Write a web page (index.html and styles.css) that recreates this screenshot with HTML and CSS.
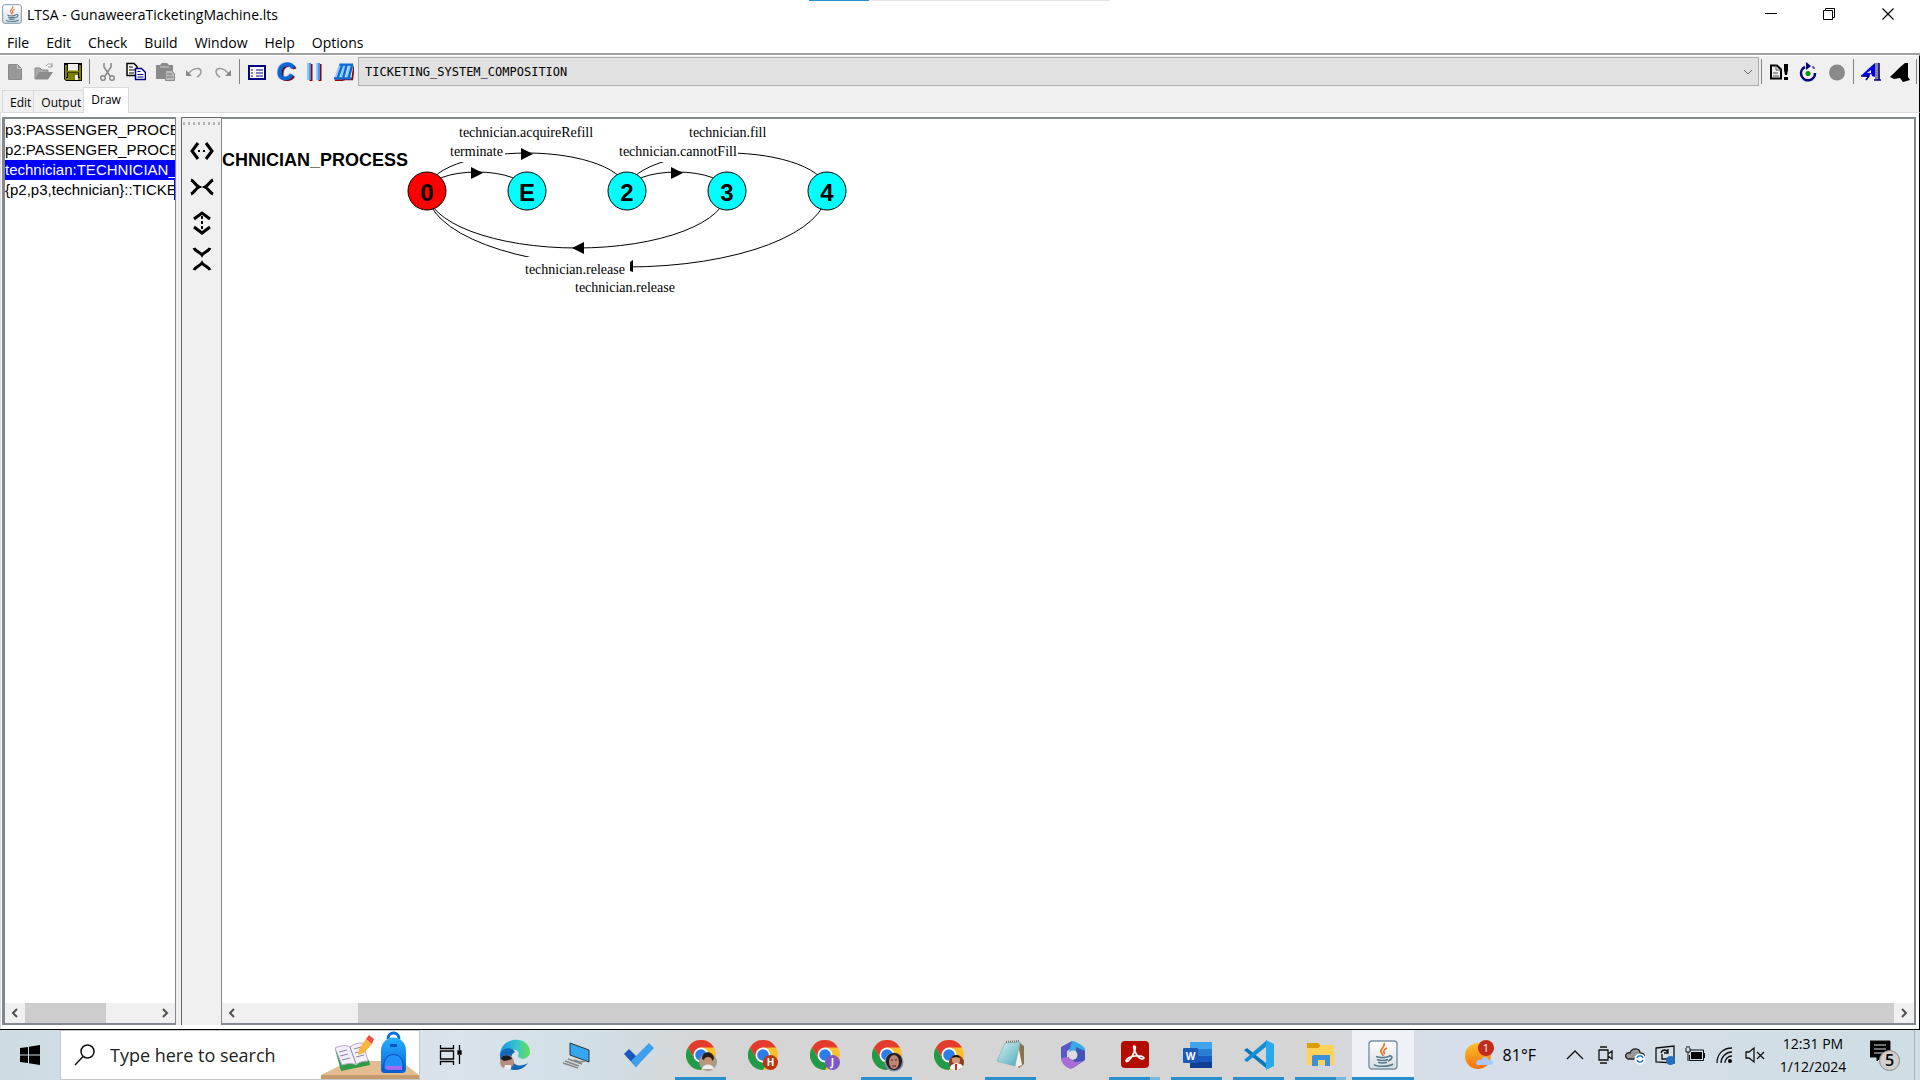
FILE: index.html
```html
<!DOCTYPE html>
<html lang="en">
<head>
<meta charset="utf-8">
<title>LTSA - GunaweeraTicketingMachine.lts</title>
<link rel="stylesheet" href="styles.css">
</head>
<body>
<svg class="defs" aria-hidden="true">
  <defs>
    <linearGradient id="paper" x1="0" y1="0" x2="0" y2="1"><stop offset="0" stop-color="#fff"/><stop offset="1" stop-color="#d5dde3"/></linearGradient>
    <linearGradient id="edgeTop" x1="0" y1="0" x2="1" y2="0"><stop offset="0" stop-color="#1795dc"/><stop offset=".55" stop-color="#35c5cf"/><stop offset="1" stop-color="#65e04c"/></linearGradient>
    <linearGradient id="note" x1="0" y1="0" x2="1" y2="1"><stop offset="0" stop-color="#d9f3f5"/><stop offset="1" stop-color="#4ba8b8"/></linearGradient>
    <linearGradient id="sun" x1="0" y1="0" x2="0" y2="1"><stop offset="0" stop-color="#f8c22c"/><stop offset="1" stop-color="#f4700e"/></linearGradient>
    <linearGradient id="bag" x1="0" y1="0" x2="0" y2="1"><stop offset="0" stop-color="#28b2ff"/><stop offset="1" stop-color="#0560d6"/></linearGradient>
    <symbol id="java" viewBox="0 0 30 30">
      <rect x="1" y="1" width="28" height="28" rx="3" fill="url(#paper)" stroke="#7890a3" stroke-width="1.4"/>
      <path d="M16 3c2 4-5 6-3 9 1 2 2 2 2 4M19 8c-4 2-4 4-2 6" fill="none" stroke="#e8762c" stroke-width="1.7"/>
      <path d="M8 16.500c4 1.500 10 1.500 13-.3M9 19.500c4 1.200 8 1.200 11 0M10 22.300c3 1 6 1 9 0M21 16c4-1 4 3-1 5M6 24.500c3 2.500 15 2.500 19-.5" fill="none" stroke="#55798f" stroke-width="1.600"/>
    </symbol>
    <symbol id="chrome" viewBox="0 0 30 30">
      <circle cx="15" cy="15" r="15" fill="#fbc02d"/>
      <path d="M2 7.500A15 15 0 0 1 28 7.500L15 7.500 8.500 19Z" fill="#e33b2e"/>
      <path d="M2 7.500A15 15 0 0 0 15 30l6.500-11.300L8.500 18.700Z" fill="#219a4a"/>
      <circle cx="15" cy="15" r="7.500" fill="#fff"/>
      <circle cx="15" cy="15" r="5.800" fill="#2b7de9"/>
    </symbol>
    <symbol id="left" viewBox="0 0 10 12"><path d="M7 2 3 6l4 4" fill="none" stroke="#505050" stroke-width="2"/></symbol>
    <symbol id="right" viewBox="0 0 10 12"><path d="M3 2l4 4-4 4" fill="none" stroke="#505050" stroke-width="2"/></symbol>
  </defs>
</svg>

<main class="window">
  <header class="titlebar">
    <svg class="app-icon" viewBox="0 0 30 30"><use href="#java"/></svg>
    <h1>LTSA - GunaweeraTicketingMachine.lts</h1>
    <div class="capture"></div>
    <div class="caption-buttons">
      <button aria-label="Minimize"><svg width="12" height="12"><path d="M0 5.500h12" stroke="#000"/></svg></button>
      <button aria-label="Restore"><svg width="12" height="12"><path d="M.5 2.500h9v9h-9zM2.500 2.500v-2h9v9h-2" fill="none" stroke="#000"/></svg></button>
      <button aria-label="Close"><svg width="12" height="12"><path d="M.5.5l11 11M11.500.5l-11 11" stroke="#000" stroke-width="1.200"/></svg></button>
    </div>
  </header>

  <nav class="menubar">
    <button>File</button><button>Edit</button><button>Check</button><button>Build</button><button>Window</button><button>Help</button><button>Options</button>
  </nav>

  <div class="toolbar">
    <button aria-label="New"><svg viewBox="0 0 20 20"><path d="M3.500 2.500h9l4 4v11h-13z" fill="#999" stroke="#8a8a8a"/><path d="M12.500 2.500v4h4" fill="none" stroke="#ccc"/></svg></button>
    <button aria-label="Open"><svg viewBox="0 0 20 20"><path d="M1 17V6h5l2 2h6v3" fill="#aaa" stroke="#8a8a8a"/><path d="M1 17.500 5 10h14l-5 7.500z" fill="#8c8c8c"/><path d="M12 4c2-3 5-3 6 0M18 1v4h-4" fill="none" stroke="#999"/></svg></button>
    <button aria-label="Save"><svg viewBox="0 0 20 20"><path d="M1 1h18v18H3l-2-2z"/><path d="M5 2h10v7H5z" fill="#efefef"/><path d="M2 3h1v13h2v-5h10v5h2V5h1v13H3l-1-1z" fill="#808000"/><path d="M3 9.500h14M3 3v12M17 3v12" stroke="#808000" stroke-width="2"/><path d="M12 13h3v5h-3z" fill="#efefef"/></svg></button>
    <span class="sep"></span>
    <button aria-label="Cut"><svg viewBox="0 0 20 20" fill="none" stroke="#888" stroke-width="1.500"><path d="M7 1v4l6 9M14 1v4l-6 9"/><circle cx="6" cy="16" r="2.300"/><circle cx="15" cy="16" r="2.300"/></svg></button>
    <button aria-label="Copy"><svg viewBox="0 0 20 20" fill="#fff"><path d="M1 1.500h7l3 3v9H1z" stroke="#000" stroke-width="1.500"/><path d="M3 5h4M3 8h6M3 11h5" stroke="#000"/><path d="M9.500 6.500h6l4 4v7h-10z" stroke="#000080" stroke-width="1.500"/><path d="M11.500 9.500h3M11.500 12.500h6M11.500 15h6" stroke="#000080"/></svg></button>
    <button aria-label="Paste"><svg viewBox="0 0 20 20"><path d="M1 3h4l2-2h5l2 2h4v14H1z" fill="#8a8a8a"/><path d="M5 5h9" stroke="#ccc"/><path d="M10.500 8.500h6l3 3v7h-9z" fill="#bbb" stroke="#888"/><path d="M12 12h5M12 15h6" stroke="#777"/></svg></button>
    <button aria-label="Undo"><svg viewBox="0 0 20 20"><path d="M5 11c4-5 11-6 12-2 0 3-2 5-4 6" fill="none" stroke="#999" stroke-width="1.500"/><path d="M2 8v6h6z" fill="#888"/></svg></button>
    <button aria-label="Redo"><svg viewBox="0 0 20 20"><path d="M15 11C11 6 4 5 3 9c0 3 2 5 4 6" fill="none" stroke="#999" stroke-width="1.500"/><path d="M18 8v6h-6z" fill="#888"/></svg></button>
    <span class="sep"></span>
    <button aria-label="Alphabet"><svg viewBox="0 0 20 20"><path d="M2 4h16v13H2z" fill="#fff" stroke="#000080" stroke-width="2"/><path d="M4 8h2M4 11h2M4 14h2M9 8h7M9 11h7M9 14h7" stroke="#000080"/></svg></button>
    <button class="compile" aria-label="Compile">C</button>
    <button aria-label="Compose"><svg viewBox="0 0 20 20"><path d="M6 2v17M15 2v17" stroke="#900" stroke-width="3"/><path d="M4 1v17M13 1v17" stroke="#8fc7ff" stroke-width="4"/><path d="M5 1v17M14 1v17" stroke="#0a62cc" stroke-width="1"/></svg></button>
    <button aria-label="Minimise"><svg viewBox="0 0 22 20" fill="none"><path d="M1 19h8l3-1h8l2-14" stroke="#900" stroke-width="2"/><path d="M3 17 8 2M9 17l4-15M15 17l4-15" stroke="#8fc7ff" stroke-width="5"/><path d="M0 17h19M4 17 9 2M10 17l4-15M16 17l4-15M6 2h15" stroke="#0a6ad6" stroke-width="2.500"/></svg></button>
    <select class="target" aria-label="Target composition"><option>TICKETING_SYSTEM_COMPOSITION</option></select>
    <span class="sep"></span>
    <button aria-label="Safety check"><svg viewBox="0 0 20 20"><path d="M2 3.500h6l4 4v9H2z" fill="#eee" stroke="#000" stroke-width="2"/><path d="M7 3v5h5M4 11h5M4 14h6" fill="none" stroke="#555"/><path d="M15 2h4v6l-1 5h-2l-1-5zM15 15h4v3h-4z"/></svg></button>
    <button aria-label="Progress check"><svg viewBox="0 0 20 20"><path d="M7 5a7 7 0 1 0 10 6" fill="none" stroke="#000080" stroke-width="2.500"/><path d="M8 0v8l5-4z" fill="#000080"/><path d="M14 5h2v2" stroke="#000080" fill="none"/><circle cx="10" cy="11.500" r="2.500" fill="#090"/></svg></button>
    <button aria-label="Stop"><svg viewBox="0 0 20 20"><circle cx="10" cy="10.500" r="8" fill="#8a8a8a"/></svg></button>
    <span class="sep"></span>
    <button aria-label="Animator"><svg viewBox="0 0 20 20"><path d="M14 1h4l1 17h-5z" fill="#888"/><path d="M0 14C4 10 9 5 14 1v14l-3-1-1-3-2 4z" fill="#00e"/><path d="M6 11l4-3v3z" fill="#f0f0f0"/><path d="M0 14h8M5 18l3-4M18 1v17M13 18h7" stroke="#000080" stroke-width="1.500"/></svg></button>
    <button aria-label="Animator trace"><svg viewBox="0 0 20 20"><path d="M0 15c5-5 9-9 15-14h3v14l2 3-7 2-3-4-6 1z"/></svg></button>
    <span class="sep last"></span>
  </div>

  <div class="tabs" role="tablist">
    <button role="tab">Edit</button><button role="tab">Output</button><button role="tab" class="active" aria-selected="true">Draw</button>
  </div>

  <section class="workspace">
    <aside class="processes">
      <ul role="listbox" aria-label="Processes">
        <li role="option">p3:PASSENGER_PROCE</li>
        <li role="option">p2:PASSENGER_PROCE</li>
        <li role="option" class="selected" aria-selected="true">technician:TECHNICIAN_P</li>
        <li role="option" class="focus">{p2,p3,technician}::TICKET</li>
      </ul>
      <div class="scrollbar side">
        <button aria-label="Scroll left"><svg><use href="#left"/></svg></button>
        <span class="track"><span class="thumb"></span></span>
        <button aria-label="Scroll right"><svg><use href="#right"/></svg></button>
      </div>
    </aside>

    <div class="stretch-tools">
      <span class="grip"></span>
      <button aria-label="Stretch horizontally"><svg viewBox="0 0 24 24"><path d="M8 4 2 12l6 8M16 4l6 8-6 8"/><path d="M8 12h10" stroke-dasharray="2 3" stroke-width="2"/></svg></button>
      <button aria-label="Shrink horizontally"><svg viewBox="0 0 24 24"><path d="M1 5c3 1 4 5 8 7-4 2-5 6-8 7M23 5c-3 1-4 5-8 7 4 2 5 6 8 7"/><path d="M9 12h6" stroke-dasharray="2 2" stroke-width="2"/></svg></button>
      <button aria-label="Stretch vertically"><svg viewBox="0 0 24 24"><path d="M4 8l8-6 8 6M4 16l8 6 8-6"/><path d="M12 5v14" stroke-dasharray="3 2" stroke-width="2"/></svg></button>
      <button aria-label="Shrink vertically"><svg viewBox="0 0 24 24"><path d="M4 1c1 3 6 4 8 7 2-3 7-4 8-7M4 23c1-3 6-4 8-7 2 3 7 4 8 7"/></svg></button>
    </div>

    <div class="canvas">
      <svg class="lts" role="img" aria-label="Labelled transition system">
        <g class="edges">
          <path d="M205 72a100 38 0 0 1 200 0M405 72a100 38 0 0 1 200 0M605 72a200 76 0 0 1-400 0"/>
        </g>
        <path d="M299 29l12 6-12 6z"/>
        <g fill="#fff"><path d="M227 24h56v19h-56zM397 24h119v19H397zM303 138h105v19H303z"/></g>
        <g class="edges"><path d="M205 72a50 19 0 0 1 100 0M405 72a50 19 0 0 1 100 0M505 72a150 57 0 0 1-300 0"/></g>
        <path d="M249 48l12 6-12 6zM449 48l12 6-12 6zM362 123v12l-12-6z"/>
        <path d="M408 143l3-2v12l-3-1z"/>
        <g stroke="#000" fill="#0ff">
          <circle cx="205" cy="72" r="19" fill="#f00"/><circle cx="305" cy="72" r="19"/><circle cx="405" cy="72" r="19"/><circle cx="505" cy="72" r="19"/><circle cx="605" cy="72" r="19"/>
        </g>
        <g class="state"><text x="205" y="82">0</text><text x="305" y="82">E</text><text x="405" y="82">2</text><text x="505" y="82">3</text><text x="605" y="82">4</text></g>
        <text class="name" x="0" y="47">CHNICIAN_PROCESS</text>
        <g class="action">
          <text x="237" y="18">technician.acquireRefill</text><text x="228" y="37">terminate</text>
          <text x="467" y="18">technician.fill</text><text x="397" y="37">technician.cannotFill</text>
          <text x="303" y="155">technician.release</text><text x="353" y="173">technician.release</text>
        </g>
      </svg>
      <div class="scrollbar main">
        <button aria-label="Scroll left"><svg><use href="#left"/></svg></button>
        <span class="track"><span class="thumb"></span></span>
        <button aria-label="Scroll right"><svg><use href="#right"/></svg></button>
      </div>
    </div>
  </section>
</main>

<footer class="taskbar">
  <button class="start" aria-label="Start"><svg width="20" height="20"><path d="M0 3l8-1v7.500H0zM9 1.800 20 0v9.500H9zM0 10.500h8V18l-8-1zM9 10.500h11V20L9 18.300z"/></svg></button>
  <label class="search">
    <svg width="22" height="22" fill="none" stroke="#111" stroke-width="1.500"><circle cx="13.500" cy="7.500" r="6.500"/><path d="M9 12.500 1 21"/></svg>
    <input type="text" placeholder="Type here to search" aria-label="Search">
    <svg class="promo" width="98" height="48">
      <path d="M0 44 28 30h52l18 14z" fill="#e3bd91"/><path d="M0 44h98v4H0z" fill="#c69b6d"/>
      <path d="M14 18l6 22 29-6-1-5-27 5-5-17z" fill="#2e9b45"/><path d="M14 17c6-3 12-3 15-1 3-3 8-4 13-4l5 18c-5 0-9 1-12 4-3-2-8-2-14 0z" fill="#f4f0fa" stroke="#b8a8cc"/>
      <path d="M29 16l6 17M18 21l8-2M19 25l8-2M21 29l8-2M33 18l7-2M34 22l8-2M35 26l8-2" stroke="#8b83a5" fill="none"/>
      <path d="M37 24l1-6 7-10 6 5-8 9z" fill="#f9b63c"/><path d="M45 8l3-4 5 4-2 5z" fill="#ef4e42"/>
      <path d="M67 8c0-8 11-8 11 0" stroke="#0870de" stroke-width="3" fill="none"/><path d="M60 20c0-18 25-18 25 0v18c0 3-2 4-4 4H64c-3 0-4-1-4-4z" fill="url(#bag)"/>
      <path d="M63 34c0-14 19-14 19 0v5H63z" fill="#2290f8" stroke="#064fb7"/><path d="M64 35h17v4H66z" fill="#a06cf0"/><path d="M69 13h7v3h-7z" fill="#0758c2"/>
    </svg>
  </label>
  <nav class="apps">
    <button class="view" aria-label="Task view"><svg viewBox="0 0 30 30" fill="none" stroke="#000" stroke-width="1.300"><path d="M5.500 5v3.500h13V5M5.500 25v-3.500h13V25M5.500 11h13v8h-13zM24.500 5v5M24.500 15v9"/><path d="M23 11h3v3h-3z" fill="#000"/></svg></button>
    <button aria-label="Edge"><svg viewBox="0 0 30 30"><path d="M0 16C0-5 30-5 30 12c0 7-10 9-12 4 3-7-6-8-10-4-4 6-1 14 7 17C6 31 0 24 0 16z" fill="url(#edgeTop)"/><path d="M0 15c2-8 12-9 15-3-5 2-5 9 0 12 4 3 9 1 13-1-5 7-13 9-20 5-5-3-8-8-8-13z" fill="#1267b6"/><circle cx="7" cy="22" r="7" fill="#b98d81"/><path d="M1 19c1-5 10-5 11 0l-3 1-5 1z" fill="#1c1a22"/><path d="M4 29l1-4h6v4z" fill="#eee"/></svg></button>
    <button aria-label="Remote computer"><svg viewBox="0 0 30 30"><path d="M8 3l19 7v12L8 15z" fill="#35a7f2" stroke="#333"/><path d="M12 20l6 2 5-1M3 21l14 5M1 23l15 5M6 19l14 5" stroke="#888" stroke-width="1.500" fill="none"/></svg></button>
    <button aria-label="To Do"><svg viewBox="0 0 30 30"><path d="M5 9 0 14l12 13 5-6z" fill="#1b55bd"/><path d="M25 3l5 5-18 19-5-6z" fill="#3fa0ee"/></svg></button>
    <button class="run" aria-label="Chrome"><svg viewBox="0 0 30 30"><use href="#chrome"/><circle cx="22" cy="22" r="9" fill="#a99b8a"/><path d="M16 19c0-9 12-9 12 0l-2 2-3-3-5 2z" fill="#2a1d18"/><circle cx="22" cy="21" r="4" fill="#c6926f"/><path d="M16 29c1-6 11-6 12 0z" fill="#eee"/></svg></button>
    <button aria-label="Chrome H"><svg viewBox="0 0 30 30"><use href="#chrome"/><circle cx="22.500" cy="22.500" r="7.500" fill="#bf360c"/><text x="22.500" y="26">H</text></svg></button>
    <button aria-label="Chrome J"><svg viewBox="0 0 30 30"><use href="#chrome"/><circle cx="22.500" cy="22.500" r="7.500" fill="#7e57c2"/><text x="22.500" y="26">J</text></svg></button>
    <button class="run" aria-label="Chrome"><svg viewBox="0 0 30 30"><use href="#chrome"/><circle cx="22" cy="22" r="9.500" fill="#8191b0"/><path d="M14 22c-1-12 17-12 16 0-1 6-4 8-8 8s-7-3-8-8z" fill="#2b1c23"/><ellipse cx="22" cy="22" rx="5" ry="7" fill="#bd8774"/><path d="M19 20h2M23 20h2M20 26h4" stroke="#422"/></svg></button>
    <button aria-label="Chrome"><svg viewBox="0 0 30 30"><use href="#chrome"/><circle cx="22.500" cy="22.500" r="7.500" fill="#8f3b24"/><circle cx="22" cy="20" r="4" fill="#d39a72"/><path d="M18 18c1-4 7-4 8 0l-4-1z" fill="#111"/><path d="M16 28c1-6 12-6 13-1l-5 3h-4z" fill="#fff"/><path d="M22 24v6" stroke="#d22" stroke-width="2"/></svg></button>
    <button class="run" aria-label="Notepad"><svg viewBox="0 0 30 30"><path d="M24 3l4 3v18l-5 4-2-3z" fill="#8c714c"/><path d="M22 4l4 21-5 2-3-4z" fill="#f1f1ee"/><path d="M9 3l15-1-5 24-18-5z" fill="url(#note)" stroke="#6baab3" stroke-width=".6"/><path d="M10 2l13-1" stroke="#777" stroke-width="2" stroke-dasharray="1 1"/></svg></button>
    <button aria-label="Microsoft 365"><svg viewBox="0 0 30 30"><path d="M14 1 3 7v12l6 4V11l10-6z" fill="#5758c9"/><path d="M14 1c4 0 13 6 13 8v10l-9-8-7 1z" fill="#39a9e8"/><path d="M27 11v9l-12 8-6-5 9-5V7z" fill="#3f55b6"/><path d="M3 18l8-1 6 5 8-1-12 8c-4-1-10-5-10-11z" fill="#a96bd5"/><circle cx="15" cy="15" r="4.500" fill="#ddd"/></svg></button>
    <button class="run multi" aria-label="Acrobat"><svg viewBox="0 0 30 30"><rect x="1" y="1" width="28" height="27" rx="4" fill="#b30b00"/><path d="M14 6c4 0-2 12-6 15-4 2-2-4 7-5 9-1 11 3 7 3-5-1-10-12-8-13z" fill="none" stroke="#fff" stroke-width="1.700"/></svg></button>
    <button class="run" aria-label="Word"><svg viewBox="0 0 30 30"><path d="M8 2h22v7H8z" fill="#41a5ee"/><path d="M8 9h22v7H8z" fill="#2b7cd3"/><path d="M8 16h22v6H8z" fill="#185abd"/><path d="M8 22h22v6H8z" fill="#103f91"/><rect x="1" y="8" width="15" height="15" rx="1" fill="#1c5ab9"/><text x="8.500" y="20">W</text></svg></button>
    <button class="run" aria-label="Visual Studio Code"><svg viewBox="0 0 30 30"><path d="M0 10l3-2 20 16v5z" fill="#0877b9"/><path d="M0 20l3 2L23 6V0z" fill="#118ed5"/><path d="M22 0l8 4v22l-8 4z" fill="#2aa8ee"/></svg></button>
    <button class="run multi" aria-label="File Explorer"><svg viewBox="0 0 30 30"><path d="M1 3h11l3 3v4H1z" fill="#dc9c05"/><path d="M1 8h11l3-3h13v20H1z" fill="#ffd25a"/><path d="M6 26V16l2-1h16v11h-5v-6h-7v6z" fill="#3c8fdb"/></svg></button>
    <button class="run active" aria-label="LTSA"><svg viewBox="0 0 30 30"><use href="#java"/></svg></button>
  </nav>
  <div class="tray">
    <button class="weather"><svg width="30" height="30" viewBox="0 0 30 30"><circle cx="13" cy="16" r="13" fill="url(#sun)"/><path d="M12 25c-3-4 2-6 4-5 2-5 8-3 8 0 5 0 5 5 1 5z" fill="#a9c8f8"/><circle cx="21" cy="8" r="8" fill="#c42b1c"/><text x="21" y="12">1</text></svg><span>81°F</span></button>
    <button aria-label="Show hidden icons"><svg viewBox="0 0 20 20"><path d="M2 14l8-8 8 8"/></svg></button>
    <button aria-label="Camera"><svg viewBox="0 0 20 20"><path d="M4 5h9v10H4zM13 9l4-3v8l-4-3M5 2h7M5 18h7"/></svg></button>
    <button aria-label="OneDrive"><svg viewBox="0 0 20 20"><path d="M3 14c-5-3-1-7 2-6 2-6 10-5 10 0 5 0 6 5 2 6z" fill="#999" stroke="#222"/><circle cx="15" cy="14" r="5.500" fill="#fff" stroke="none"/><path d="M12 13c1-3 5-3 6 0M18 15c-1 3-5 3-6 0" stroke="#1878c8" stroke-width="1.500"/></svg></button>
    <button aria-label="Display sync"><svg viewBox="0 0 20 20"><path d="M1 3l18-2v17L1 17zM6 8c1-4 6-4 7 0M13 4v4h-4M7 9v5h5"/><circle cx="15.500" cy="15.500" r="4.500" fill="#2470bd" stroke="none"/></svg></button>
    <button aria-label="Battery"><svg viewBox="0 0 20 20"><path d="M6 7h11v7H6z" fill="#000" stroke="none"/><path d="M5 5h13.500v10.500H4.500V10M19.500 8v5M1 3v4h4V3M3 7v9M2 1v2M4 1v2" stroke-width="1"/></svg></button>
    <button aria-label="Wi-Fi"><svg viewBox="0 0 20 20"><path d="M2 18C2 9 8 3 17 3M6 18c0-6 5-11 11-11M10 18c0-4 3-7 7-7"/><circle cx="15" cy="16" r="2" fill="#000" stroke="none"/></svg></button>
    <button aria-label="Muted"><svg viewBox="0 0 20 20"><path d="M1 7h3l5-4v14l-5-4H1zM12 7l7 7M19 7l-7 7"/></svg></button>
    <button class="clock"><time>12:31 PM</time><time>1/12/2024</time></button>
    <button class="alerts" aria-label="Notifications"><svg width="32" height="32"><path d="M0 2h20v16h-9l-4 4v-4H0z"/><path d="M4 6h12M4 10h12M4 14h12" stroke="#ddd"/><circle cx="19.500" cy="21.500" r="10" fill="#cfcfcf" stroke="#888"/><text x="19.500" y="27">5</text></svg></button>
  </div>
</footer>
</body>
</html>
```
FILE: styles.css
```css
* { box-sizing: border-box; }
body {
  margin: 0;
  height: 100vh;
  display: flex;
  flex-direction: column;
  background: #fff;
  color: #000;
  font: 14px/20px "Open Sans", "Noto Sans", sans-serif;
  overflow: hidden;
}
button { margin: 0; padding: 0; border: 0; background: none; color: inherit; font: inherit; }
svg { display: block; flex: none; }
.defs { position: absolute; width: 0; height: 0; }

.window { flex: 1; min-height: 0; display: flex; flex-direction: column; border-bottom: 1px solid #000; }

/* title and menu */
.titlebar { position: relative; display: flex; align-items: center; height: 28px; padding-left: 2px; gap: 5px; }
.titlebar h1 { margin: 0; font-size: 14px; font-weight: 400; line-height: 22px; padding-top: 2px; }
.app-icon { width: 20px; height: 20px; }
.capture { position: absolute; top: 0; left: 50%; width: 301px; height: 1px; margin-left: -151px; background: linear-gradient(90deg, #2a8dcc 60px, #e4e4e4 60px); }
.caption-buttons { display: flex; margin-left: auto; }
.caption-buttons button { width: 58px; display: grid; place-items: center; }
.caption-buttons button:last-child { width: 60px; margin-right: 2px; }
.menubar { display: flex; height: 27px; padding-left: 7px; gap: 17px; border-bottom: 2px solid #a0a0a0; font-size: 14px; }
.menubar button { line-height: 26px; padding-top: 2px; }

/* toolbar */
.toolbar { display: flex; align-items: center; height: 33px; padding-bottom: 1px; background: #f0f0f0; border-top: 1px solid #fff; border-right: 1px solid #000; }
.toolbar button { flex: none; width: 29px; height: 29px; display: grid; place-items: center; }
.toolbar svg { width: 20px; height: 20px; }
.sep { flex: none; width: 5px; height: 25px; background: linear-gradient(#808080, #808080) 2px 0 / 1px 100% no-repeat; }
.toolbar .compile { font: italic bold 24px/24px "Liberation Sans", sans-serif; color: #0a66d0; -webkit-text-stroke: 1px #0a66d0; text-shadow: -1px -1px #8fc7ff, 2px 1px #900; }
.target {
  appearance: none;
  flex: 1;
  min-width: 0;
  height: 29px;
  padding: 0 6px;
  border: 1px solid #adadad;
  border-radius: 0;
  color: #000;
  font: 12px "DejaVu Sans Mono", monospace;
  background: #e1e1e1 url("data:image/svg+xml,%3Csvg xmlns='http://www.w3.org/2000/svg' width='10' height='6'%3E%3Cpath d='M1 1l4 4 4-4' fill='none' stroke='%23666'/%3E%3C/svg%3E") right 5px center no-repeat;
}

/* tabs */
.tabs { display: flex; align-items: flex-end; height: 25px; padding-left: 2px; background: #f0f0f0; border-right: 1px solid #000; border-bottom: 1px solid #dcdcdc; font-size: 12px; }
.tabs button { height: 22px; padding: 2px 2px 0 7px; border: 1px solid #d9d9d9; border-width: 1px 0 0 1px; }
.tabs .active { height: 26px; margin-bottom: -1px; padding: 0 7px 1px; border-right-width: 1px; background: #fff; }

/* work area */
.workspace { flex: 1; min-height: 0; display: flex; padding: 4px 3px 4px 1px; border-right: 1px solid #000; border-left: 1px solid #dcdcdc; }
.processes { flex: none; width: 174px; display: flex; flex-direction: column; border: 2px solid #828790; border-left-width: 3px; border-right-width: 1px; }
.processes ul { flex: 1; margin: 0; padding: 1px 0 0; list-style: none; overflow: hidden; font: 15px/20px "Liberation Sans", Arial, sans-serif; }
.processes li { height: 20px; overflow: hidden; white-space: nowrap; }
.processes .selected { background: #00f; color: #fff; }
.processes .focus { border-right: 1px solid #00f; }

.scrollbar { display: flex; height: 20px; background: #f0f0f0; }
.scrollbar button { width: 20px; display: grid; place-items: center; }
.scrollbar button svg { width: 10px; height: 12px; }
.track { flex: 1; display: flex; }
.thumb { background: #cdcdcd; }
.side .thumb { width: 62%; }
.main .thumb { width: 93%; margin-left: auto; }

.stretch-tools { flex: none; width: 40px; margin-left: 5px; display: flex; flex-direction: column; align-items: center; background: #f0f0f0; border-left: 1px solid #696969; border-top: 1px solid #696969; box-shadow: -5px 0 #f0f0f0; }
.stretch-tools button { height: 36px; display: grid; place-items: center; }
.stretch-tools svg { width: 24px; height: 24px; fill: none; stroke: #000; stroke-width: 3px; }
.grip { width: 37px; height: 3px; margin: 4px 0 8px; background: repeating-linear-gradient(90deg, #b4b4b4 0 2px, #f0f0f0 2px 5px); }

.canvas { flex: 1; min-width: 0; display: flex; flex-direction: column; border: 2px solid #828790; border-left-width: 1px; }
.lts { flex: 1; width: 100%; min-height: 0; }
.lts .edges { fill: none; stroke: #000; stroke-width: 1px; }
.lts .state { font: bold 24px "Liberation Sans", Arial, sans-serif; text-anchor: middle; }
.lts .name { font: bold 18px "Liberation Sans", Arial, sans-serif; }
.lts .action { font: 14px "Liberation Serif", "Times New Roman", serif; }

/* taskbar */
.taskbar {
  flex: none;
  display: flex;
  height: 50px;
  background: linear-gradient(90deg, #cddce3 0, #d5e0e8 12%, #dae2eb 24%, #d0dfe5 31%, #d5d5d5 37%, #d5d5d5 68%, #d6dee9 75%, #d5dee8 84%, #cedee3 100%);
}
.start { width: 60px; display: grid; place-items: center; }
.search { flex: none; width: 360px; display: flex; align-items: center; background: #fff; border: 1px solid #c4c8cb; padding-left: 13px; }
.search input { flex: 1; min-width: 0; margin-left: 14px; padding: 0; border: 0; outline: 0; background: none; color: #222; font: 18px "Open Sans", sans-serif; }
.search input::placeholder { color: #222; opacity: 1; }
.promo { align-self: flex-end; }
.apps { display: flex; }
.apps button { position: relative; flex: none; width: 62px; display: grid; place-items: center; }
.apps .view { width: 60px; margin-right: 4px; }
.apps svg { width: 30px; height: 30px; overflow: visible; }
.apps text { fill: #fff; font: bold 10px "Open Sans", sans-serif; text-anchor: middle; }
.run::after { content: ""; position: absolute; bottom: 0; left: 5px; right: 6px; height: 3px; background: #2a8fcb; }
.multi::after { background: linear-gradient(90deg, #2a8fcb 80%, #7bb8de 80%); }
.apps .active { background: #eef1f6; }
.active::after { left: 0; right: 0; }
.tray { display: flex; margin-left: auto; border-right: 1px solid #a9b5bb; margin-right: 5px; }
.tray button { width: 30px; display: grid; place-items: center; }
.tray button > svg { fill: none; stroke: #111; stroke-width: 1.3px; width: 20px; height: 20px; }
.tray .weather { width: auto; display: flex; align-items: center; gap: 8px; margin-right: 24px; font-size: 16px; }
.tray .weather svg { width: 30px; height: 30px; stroke: none; }
.weather text { fill: #fff; font: 11px "Open Sans", sans-serif; text-anchor: middle; }
.tray .clock { width: 86px; display: flex; flex-direction: column; align-items: center; justify-content: center; font-size: 14px; line-height: 23px; }
.tray .alerts { width: 58px; padding-left: 2px; }
.tray .alerts svg { width: 32px; height: 32px; fill: #000; stroke-width: 1px; }
.alerts text { font: 600 16px "Open Sans", sans-serif; text-anchor: middle; stroke: none; }
```
